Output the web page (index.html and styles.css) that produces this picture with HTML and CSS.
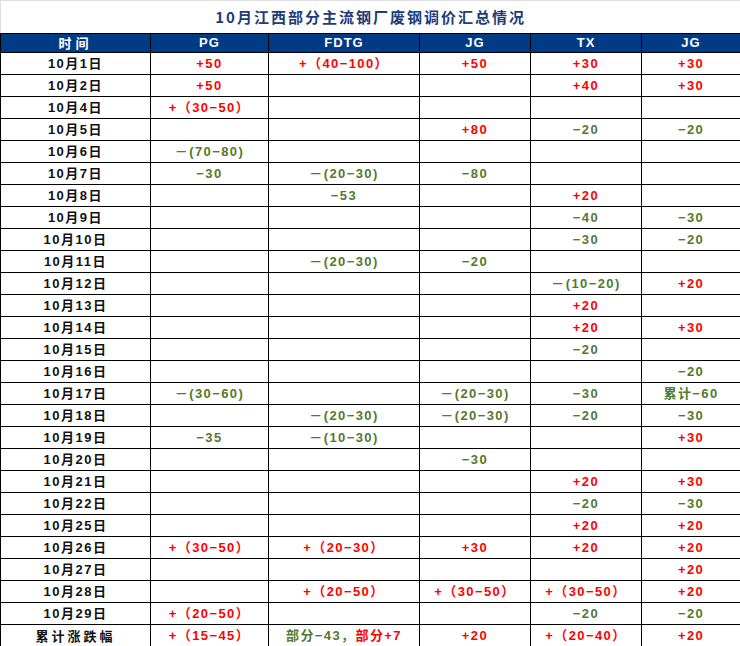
FILE: index.html
```html
<!DOCTYPE html>
<html lang="zh">
<head>
<meta charset="utf-8">
<title>10月江西部分主流钢厂废钢调价汇总情况</title>
<link rel="stylesheet" href="styles.css">
</head>
<body>
<table class="sheet">
  <colgroup>
    <col class="c-date"><col class="c-pg"><col class="c-fdtg"><col class="c-jg"><col class="c-tx"><col class="c-jg2">
  </colgroup>
  <thead>
    <tr class="title-row"><th colspan="6" class="title">10月江西部分主流钢厂废钢调价汇总情况</th></tr>
    <tr class="head-row"><th class="cjk">时间</th><th>PG</th><th>FDTG</th><th>JG</th><th>TX</th><th>JG</th></tr>
  </thead>
  <tbody>
    <tr><td class="date">10月1日</td><td class="up">+50</td><td class="up">+（40−100）</td><td class="up">+50</td><td class="up">+30</td><td class="up">+30</td></tr>
    <tr><td class="date">10月2日</td><td class="up">+50</td><td></td><td></td><td class="up">+40</td><td class="up">+30</td></tr>
    <tr><td class="date">10月4日</td><td class="up">+（30−50）</td><td></td><td></td><td></td><td></td></tr>
    <tr><td class="date">10月5日</td><td></td><td></td><td class="up">+80</td><td class="dn">−20</td><td class="dn">−20</td></tr>
    <tr><td class="date">10月6日</td><td class="dn">－(70−80)</td><td></td><td></td><td></td><td></td></tr>
    <tr><td class="date">10月7日</td><td class="dn">−30</td><td class="dn">－(20−30)</td><td class="dn">−80</td><td></td><td></td></tr>
    <tr><td class="date">10月8日</td><td></td><td class="dn">−53</td><td></td><td class="up">+20</td><td></td></tr>
    <tr><td class="date">10月9日</td><td></td><td></td><td></td><td class="dn">−40</td><td class="dn">−30</td></tr>
    <tr><td class="date">10月10日</td><td></td><td></td><td></td><td class="dn">−30</td><td class="dn">−20</td></tr>
    <tr><td class="date">10月11日</td><td></td><td class="dn">－(20−30)</td><td class="dn">−20</td><td></td><td></td></tr>
    <tr><td class="date">10月12日</td><td></td><td></td><td></td><td class="dn">－(10−20)</td><td class="up">+20</td></tr>
    <tr><td class="date">10月13日</td><td></td><td></td><td></td><td class="up">+20</td><td></td></tr>
    <tr><td class="date">10月14日</td><td></td><td></td><td></td><td class="up">+20</td><td class="up">+30</td></tr>
    <tr><td class="date">10月15日</td><td></td><td></td><td></td><td class="dn">−20</td><td></td></tr>
    <tr><td class="date">10月16日</td><td></td><td></td><td></td><td></td><td class="dn">−20</td></tr>
    <tr><td class="date">10月17日</td><td class="dn">－(30−60)</td><td></td><td class="dn">－(20−30)</td><td class="dn">−30</td><td class="dn">累计−60</td></tr>
    <tr><td class="date">10月18日</td><td></td><td class="dn">－(20−30)</td><td class="dn">－(20−30)</td><td class="dn">−20</td><td class="dn">−30</td></tr>
    <tr><td class="date">10月19日</td><td class="dn">−35</td><td class="dn">－(10−30)</td><td></td><td></td><td class="up">+30</td></tr>
    <tr><td class="date">10月20日</td><td></td><td></td><td class="dn">−30</td><td></td><td></td></tr>
    <tr><td class="date">10月21日</td><td></td><td></td><td></td><td class="up">+20</td><td class="up">+30</td></tr>
    <tr><td class="date">10月22日</td><td></td><td></td><td></td><td class="dn">−20</td><td class="dn">−30</td></tr>
    <tr><td class="date">10月25日</td><td></td><td></td><td></td><td class="up">+20</td><td class="up">+20</td></tr>
    <tr><td class="date">10月26日</td><td class="up">+（30−50）</td><td class="up">+（20−30）</td><td class="up">+30</td><td class="up">+20</td><td class="up">+20</td></tr>
    <tr><td class="date">10月27日</td><td></td><td></td><td></td><td></td><td class="up">+20</td></tr>
    <tr><td class="date">10月28日</td><td></td><td class="up">+（20−50）</td><td class="up">+（30−50）</td><td class="up">+（30−50）</td><td class="up">+20</td></tr>
    <tr><td class="date">10月29日</td><td class="up">+（20−50）</td><td></td><td></td><td class="dn">−20</td><td class="dn">−20</td></tr>
    <tr><td class="date total">累计涨跌幅</td><td class="up">+（15−45）</td><td><span class="dn">部分−43，</span><span class="up">部分+7</span></td><td class="up">+20</td><td class="up">+（20−40）</td><td class="up">+20</td></tr>
  </tbody>
</table>
</body>
</html>
```
FILE: styles.css
```css
html, body {
  margin: 0;
  padding: 0;
  background: #ffffff;
}

.sheet {
  width: 740px;
  table-layout: fixed;
  border-collapse: collapse;
  font-family: "Liberation Sans", "Noto Sans CJK SC", sans-serif;
  font-weight: 700;
  font-size: 13px;
}

.c-date { width: 150px; }
.c-pg { width: 118px; }
.c-fdtg { width: 151px; }
.c-jg { width: 111px; }
.c-tx { width: 111px; }
.c-jg2 { width: 99px; }

.title-row th {
  height: 32px;
  padding: 0;
  border-top: 1px solid #dedede;
  border-left: 1px solid #dedede;
  border-right: 1px solid #dedede;
  border-bottom: 1px solid #000;
}

.title {
  font-family: "Noto Sans CJK SC", sans-serif;
  font-size: 15px;
  font-weight: 700;
  color: #1c3d78;
  letter-spacing: 2px;
  text-align: center;
  vertical-align: middle;
  line-height: 18px;
  padding-top: 2px;
}

.head-row th {
  height: 18px;
  padding: 0;
  background: #013a85;
  color: #ffffff;
  border: 1px solid #000;
  font-size: 13px;
  line-height: 16px;
  letter-spacing: 1px;
  text-align: center;
}

.head-row th.cjk {
  font-family: "Noto Sans CJK SC", sans-serif;
  letter-spacing: 4px;
  font-size: 13px;
}

tbody tr {
  height: 22px;
}

tbody td {
  border: 1px solid #000;
  padding: 0;
  text-align: center;
  vertical-align: middle;
  line-height: 16px;
  letter-spacing: 1.4px;
  white-space: nowrap;
}

.date {
  color: #111111;
  letter-spacing: 1.5px;
}

.total {
  font-family: "Noto Sans CJK SC", sans-serif;
  letter-spacing: 3px;
  font-size: 13px;
}

.up { color: #ff0000; }
.dn { color: #527a2c; }
```
